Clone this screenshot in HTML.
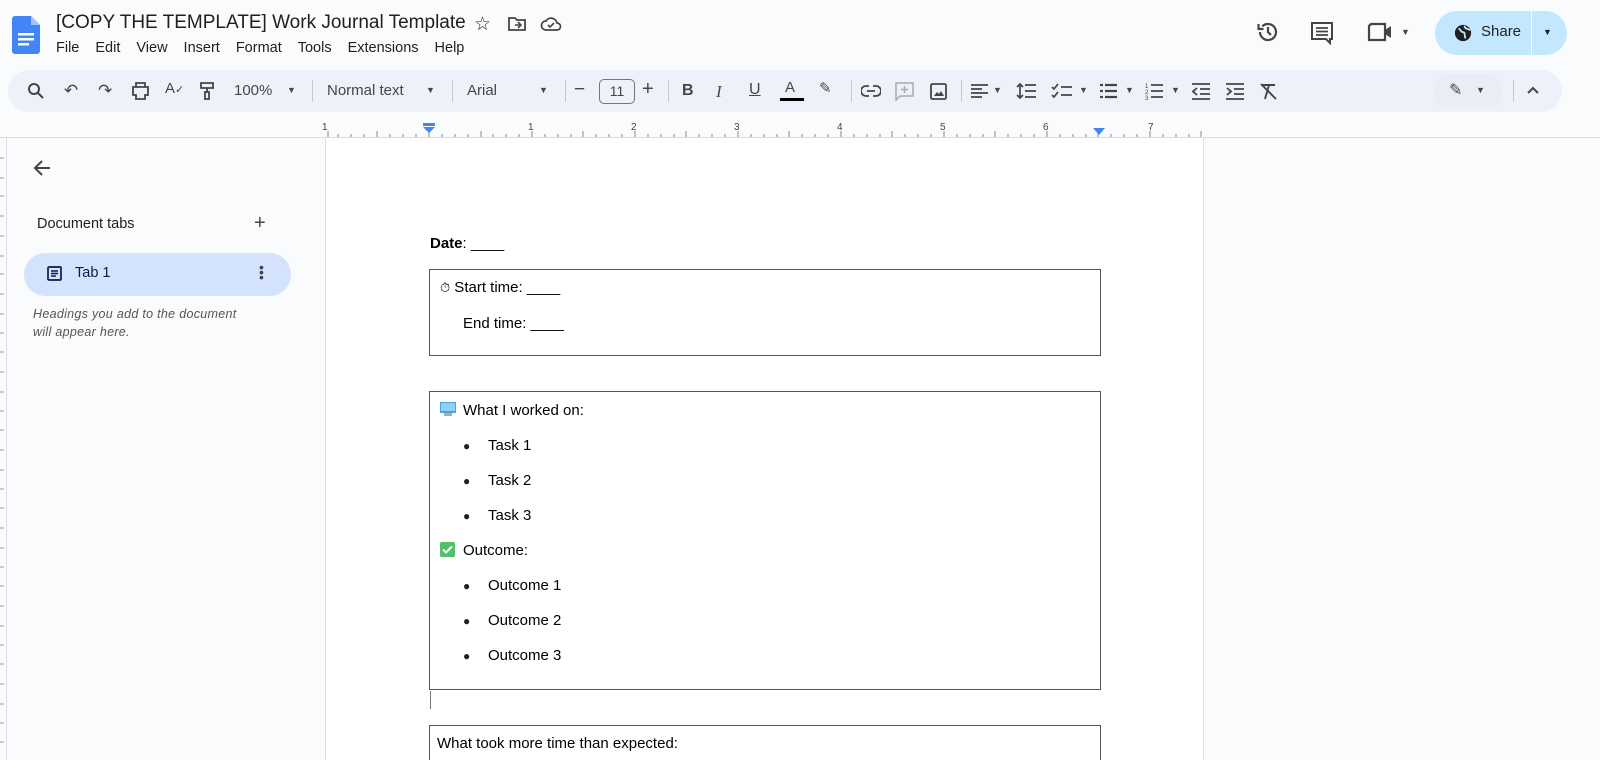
<!DOCTYPE html>
<html style="width:1600px;height:760px;overflow:hidden"><head><meta charset="utf-8"><style>
*{margin:0;padding:0;box-sizing:border-box}
body{width:1600px;height:760px;overflow:hidden;background:#f9fbfd;font-family:"Liberation Sans",Arial,sans-serif;color:#1f1f1f;position:relative}
.a{position:absolute}
.menu span{margin-right:16px}
.tb{left:8px;top:70px;width:1554px;height:42px;border-radius:21px;background:#edf2fa}
.sep{position:absolute;top:80px;width:1px;height:22px;background:#c7c7c7}
.ic{position:absolute;font-size:15px;color:#444746}
.doc{font-family:"Liberation Sans",Arial,sans-serif;font-size:15px;color:#000}
.box{position:absolute;left:429px;width:672px;border:1px solid #555}
.bul{position:absolute;left:463px;font-size:12px}
</style></head><body>
<svg class="a" style="left:12px;top:16px" width="28" height="38" viewBox="0 0 28 38"><path d="M3 0h16l9 9v26a3 3 0 0 1-3 3H3a3 3 0 0 1-3-3V3a3 3 0 0 1 3-3z" fill="#4285f4"/><path d="M19 0v9h9z" fill="#a1c2fa"/><rect x="6" y="17" width="16" height="2.5" fill="#fff"/><rect x="6" y="22" width="16" height="2.5" fill="#fff"/><rect x="6" y="27" width="11" height="2.5" fill="#fff"/></svg>
<div class="a" style="left:56px;top:12px;font-size:19px;color:#1f1f1f">[COPY THE TEMPLATE] Work Journal Template</div>
<div class="a" style="left:474px;top:13px;font-size:19px">☆</div>
<svg class="a" style="left:507px;top:16px" width="20" height="16" viewBox="0 0 20 16"><path d="M2 2h6l2 2h8v10H2z" fill="none" stroke="#444" stroke-width="1.8"/><path d="M8 9h6M11 6l3 3-3 3" fill="none" stroke="#444" stroke-width="1.6"/></svg>
<svg class="a" style="left:540px;top:16px" width="22" height="16" viewBox="0 0 22 16"><path d="M6 14a4.5 4.5 0 0 1 0-9 6 6 0 0 1 11 2 3.5 3.5 0 0 1 0 7z" fill="none" stroke="#444" stroke-width="1.7"/><path d="M8 9l2 2 4-4" fill="none" stroke="#444" stroke-width="1.6"/></svg>
<div class="a menu" style="left:56px;top:40px;font-size:14.5px;color:#1f1f1f"><span>File</span><span>Edit</span><span>View</span><span>Insert</span><span>Format</span><span>Tools</span><span>Extensions</span><span>Help</span></div>
<svg class="a" style="left:1255px;top:20px" width="26" height="24" viewBox="0 0 24 24"><path d="M4 12a8 8 0 1 0 2.3-5.6" fill="none" stroke="#444" stroke-width="2.2"/><path d="M2.5 4v5h5" fill="none" stroke="#444" stroke-width="2.2"/><path d="M12 7v5l3 3" fill="none" stroke="#444" stroke-width="2.2"/></svg>
<svg class="a" style="left:1310px;top:21px" width="24" height="24" viewBox="0 0 24 24"><path d="M2 2h20v16h-2v4l-4-4H2z" fill="none" stroke="#444" stroke-width="2"/><path d="M6 7h12M6 10.5h12M6 14h12" stroke="#444" stroke-width="1.8"/></svg>
<svg class="a" style="left:1367px;top:22px" width="28" height="20" viewBox="0 0 28 20"><path d="M4 2h14v16H2V4z" fill="none" stroke="#444" stroke-width="2.2"/><path d="M18 8l6-4v12l-6-4" fill="#444"/></svg>
<div class="a" style="left:1401px;top:27px;font-size:9px;color:#444">▼</div>
<div class="a" style="left:1435px;top:11px;width:132px;height:44px;border-radius:22px;background:#c2e7ff"></div>
<div class="a" style="left:1531px;top:11px;width:1px;height:44px;background:#f9fbfd"></div>
<svg class="a" style="left:1454px;top:24px" width="18" height="18" viewBox="0 0 20 20"><circle cx="10" cy="10" r="9" fill="#1f1f1f"/><path d="M5 5c3 1 2 4 5 4s1 5 3 7M12 2c-1 3 3 3 6 5" fill="none" stroke="#c2e7ff" stroke-width="2"/></svg>
<div class="a" style="left:1481px;top:23px;font-size:15px;color:#1f1f1f">Share</div>
<div class="a" style="left:1543px;top:27px;font-size:9px">▼</div>
<div class="a tb"></div>
<svg class="a" style="left:27px;top:82px" width="18" height="18" viewBox="0 0 18 18"><circle cx="7" cy="7" r="5" fill="none" stroke="#444" stroke-width="2"/><path d="M11 11l5 5" stroke="#444" stroke-width="2"/></svg>
<div class="ic" style="left:64px;top:81px;font-size:17px">↶</div>
<div class="ic" style="left:98px;top:81px;font-size:17px">↷</div>
<svg class="a" style="left:131px;top:82px" width="19" height="18" viewBox="0 0 19 18"><path d="M5 1h9v4H5zM2 5h15v8h-3v4H5v-4H2z" fill="none" stroke="#444" stroke-width="1.8"/></svg>
<div class="ic" style="left:165px;top:80px;font-size:15px">A<span style="font-size:11px">✓</span></div>
<svg class="a" style="left:199px;top:81px" width="16" height="20" viewBox="0 0 16 20"><path d="M2 2h12v5H2zM8 7v4M6 11h4v7H6z" fill="none" stroke="#444" stroke-width="1.8"/></svg>
<div class="ic" style="left:234px;top:82px;font-size:15px">100%</div>
<div class="ic" style="left:287px;top:85px;font-size:9px">▼</div>
<div class="sep" style="left:312px"></div>
<div class="ic" style="left:327px;top:82px;font-size:15px">Normal text</div>
<div class="ic" style="left:426px;top:85px;font-size:9px">▼</div>
<div class="sep" style="left:452px"></div>
<div class="ic" style="left:467px;top:82px;font-size:15px">Arial</div>
<div class="ic" style="left:539px;top:85px;font-size:9px">▼</div>
<div class="sep" style="left:565px"></div>
<div class="ic" style="left:574px;top:79px;font-size:19px">−</div>
<div class="a" style="left:599px;top:79px;width:36px;height:25px;border:1px solid #747775;border-radius:5px;font-size:14px;text-align:center;line-height:23px;color:#444">11</div>
<div class="ic" style="left:642px;top:78px;font-size:20px">+</div>
<div class="sep" style="left:668px"></div>
<div class="ic" style="left:682px;top:82px;font-weight:bold;font-size:16px">B</div>
<div class="ic" style="left:716px;top:82px;font-style:italic;font-size:17px;font-family:'Liberation Serif',serif">I</div>
<div class="ic" style="left:749px;top:81px;text-decoration:underline;font-size:16px">U</div>
<div class="ic" style="left:785px;top:79px;font-size:15px">A</div>
<div class="a" style="left:780px;top:98px;width:24px;height:3px;background:#000"></div>
<div class="ic" style="left:819px;top:79px;font-size:15px">✎</div>
<div class="sep" style="left:851px"></div>
<svg class="a" style="left:861px;top:85px" width="20" height="12" viewBox="0 0 20 12"><path d="M8 1H5a5 5 0 0 0 0 10h3M12 1h3a5 5 0 0 1 0 10h-3M6 6h8" fill="none" stroke="#444" stroke-width="1.8"/></svg>
<svg class="a" style="left:895px;top:82px" width="19" height="19" viewBox="0 0 19 19"><path d="M1 1h17v13H5l-4 4z" fill="none" stroke="#aaa" stroke-width="1.5"/><path d="M9.5 4v7M6 7.5h7" stroke="#aaa" stroke-width="1.5"/></svg>
<svg class="a" style="left:930px;top:83px" width="17" height="17" viewBox="0 0 17 17"><rect x="1" y="1" width="15" height="15" rx="1.5" fill="none" stroke="#444" stroke-width="1.8"/><path d="M4 13l3-4 2 2 2-3 3 5z" fill="#444"/></svg>
<div class="sep" style="left:961px"></div>
<svg class="a" style="left:971px;top:84px" width="17" height="15" viewBox="0 0 17 15"><path d="M0 1h17M0 5h11M0 9h17M0 13h11" stroke="#444" stroke-width="1.8"/></svg>
<div class="ic" style="left:993px;top:85px;font-size:9px">▼</div>
<svg class="a" style="left:1016px;top:83px" width="20" height="16" viewBox="0 0 20 16"><path d="M4 1v14M1 4l3-3 3 3M1 12l3 3 3-3M9 2h11M9 8h11M9 14h11" fill="none" stroke="#444" stroke-width="1.7"/></svg>
<svg class="a" style="left:1051px;top:83px" width="22" height="16" viewBox="0 0 22 16"><path d="M1 4l2 2 4-5M1 12l2 2 4-5M10 4h11M10 12h11" fill="none" stroke="#444" stroke-width="1.7"/></svg>
<div class="ic" style="left:1079px;top:85px;font-size:9px">▼</div>
<svg class="a" style="left:1099px;top:83px" width="18" height="16" viewBox="0 0 18 16"><path d="M1 2h3M1 8h3M1 14h3M6 2h12M6 8h12M6 14h12" stroke="#444" stroke-width="2.2"/></svg>
<div class="ic" style="left:1125px;top:85px;font-size:9px">▼</div>
<svg class="a" style="left:1145px;top:82px" width="18" height="18" viewBox="0 0 18 18"><path d="M6 3h12M6 9h12M6 15h12" stroke="#444" stroke-width="1.8"/><text x="0" y="6" font-size="6" fill="#444">1</text><text x="0" y="12" font-size="6" fill="#444">2</text><text x="0" y="18" font-size="6" fill="#444">3</text></svg>
<div class="ic" style="left:1171px;top:85px;font-size:9px">▼</div>
<svg class="a" style="left:1192px;top:83px" width="18" height="17" viewBox="0 0 18 17"><path d="M0 1h18M8 6h10M8 11h10M0 16h18M5 5l-4 3.5 4 3.5" fill="none" stroke="#444" stroke-width="1.8"/></svg>
<svg class="a" style="left:1226px;top:83px" width="18" height="17" viewBox="0 0 18 17"><path d="M0 1h18M8 6h10M8 11h10M0 16h18M1 5l4 3.5-4 3.5" fill="none" stroke="#444" stroke-width="1.8"/></svg>
<svg class="a" style="left:1259px;top:82px" width="19" height="19" viewBox="0 0 19 19"><path d="M3 3h13M10 3l-4 14M2 2l15 15" fill="none" stroke="#444" stroke-width="1.9"/></svg>
<div class="a" style="left:1433px;top:74px;width:70px;height:34px;border-radius:17px;background:#e9eef6"></div>
<div class="ic" style="left:1449px;top:80px;font-size:16px">✎</div>
<div class="ic" style="left:1476px;top:85px;font-size:9px">▼</div>
<div class="sep" style="left:1513px"></div>
<svg class="a" style="left:1527px;top:86px" width="12" height="8" viewBox="0 0 12 8"><path d="M1 7l5-5 5 5" fill="none" stroke="#444" stroke-width="2"/></svg>
<div class="a" style="left:0;top:137px;width:1600px;height:1px;background:#dadce0"></div>
<svg class="a" style="left:320px;top:118px" width="900" height="20">
<g stroke="#888" stroke-width="1">
<path d="M8 19v-6M18 19v-3M31 19v-3M44 19v-3M57 19v-6M70 19v-3M83 19v-3M96 19v-3M109 19v-6M122 19v-3M135 19v-3M148 19v-3M161 19v-6M173 19v-3M186 19v-3M199 19v-3M212 19v-6M225 19v-3M238 19v-3M251 19v-3M263 19v-6M276 19v-3M289 19v-3M302 19v-3M315 19v-6M328 19v-3M341 19v-3M354 19v-3M366 19v-6M379 19v-3M392 19v-3M405 19v-3M418 19v-6M431 19v-3M444 19v-3M457 19v-3M469 19v-6M482 19v-3M495 19v-3M508 19v-3M521 19v-6M534 19v-3M547 19v-3M560 19v-3M572 19v-6M585 19v-3M598 19v-3M611 19v-3M624 19v-6M637 19v-3M650 19v-3M663 19v-3M675 19v-6M688 19v-3M701 19v-3M714 19v-3M727 19v-6M740 19v-3M753 19v-3M766 19v-3M778 19v-6M791 19v-3M804 19v-3M817 19v-3M830 19v-6M843 19v-3M856 19v-3M869 19v-3M881 19v-6"/></g>
<g font-size="10" fill="#444" font-family="Liberation Sans"><text x="2" y="12">1</text><text x="208" y="12">1</text><text x="311" y="12">2</text><text x="414" y="12">3</text><text x="517" y="12">4</text><text x="620" y="12">5</text><text x="723" y="12">6</text><text x="828" y="12">7</text></g>
<rect x="103" y="5" width="12" height="3" fill="#4285f4"/><path d="M103 9h12l-6 6z" fill="#4285f4"/><path d="M773 10h12l-6 7z" fill="#4285f4"/>
</svg>
<div class="a" style="left:6px;top:138px;width:1px;height:622px;background:#dadce0"></div>
<svg class="a" style="left:0;top:138px" width="6" height="622"><g stroke="#999"><path d="M0 20h4M0 40h4M0 58h4M0 78h4M0 98h4M0 118h4M0 136h4M0 156h4M0 176h4M0 195h4M0 214h4M0 234h4M0 254h4M0 273h4M0 292h4M0 312h4M0 332h4M0 351h4M0 370h4M0 390h4M0 410h4M0 429h4M0 448h4M0 468h4M0 488h4M0 507h4M0 526h4M0 546h4M0 566h4M0 585h4M0 604h4"/></g></svg>
<svg class="a" style="left:33px;top:159px" width="18" height="18" viewBox="0 0 18 18"><path d="M17 9H2M9 2L2 9l7 7" fill="none" stroke="#444" stroke-width="2"/></svg>
<div class="a" style="left:37px;top:216px;font-size:14.5px;color:#1f1f1f">Document tabs</div>
<div class="a" style="left:254px;top:212px;font-size:20px;color:#444">+</div>
<div class="a" style="left:24px;top:253px;width:267px;height:43px;border-radius:22px;background:#d3e3fd"></div>
<svg class="a" style="left:47px;top:266px" width="15" height="15" viewBox="0 0 15 15"><rect x="1" y="1" width="13" height="13" rx="1" fill="none" stroke="#0b1b48" stroke-width="1.7"/><path d="M4 5h7M4 7.5h7M4 10h5" stroke="#0b1b48" stroke-width="1.5"/></svg>
<div class="a" style="left:75px;top:265px;font-size:14.5px;color:#0b1b48">Tab 1</div>
<div class="a" style="left:259px;top:265px;width:4px;font-size:14px;line-height:5px;color:#444">•<br>•<br>•</div>
<div class="a" style="left:33px;top:305px;font-size:12.5px;font-style:italic;color:#555;line-height:18px;letter-spacing:.3px">Headings you add to the document<br>will appear here.</div>
<div class="a" style="left:325px;top:138px;width:879px;height:622px;background:#fff;border-left:1px solid #e0e0e0;border-right:1px solid #e0e0e0"></div>
<div class="a doc" style="left:430px;top:235px"><b>Date</b>: ____</div>
<div class="box" style="top:269px;height:87px"></div>
<div class="a doc" style="left:440px;top:279px"><span style="font-size:13px">⏱</span> Start time: ____</div>
<div class="a doc" style="left:463px;top:315px">End time: ____</div>
<div class="box" style="top:391px;height:299px"></div>
<svg class="a" style="left:440px;top:402px" width="16" height="15" viewBox="0 0 16 15"><rect x="0" y="0" width="16" height="11" fill="#4aa3df"/><rect x="1" y="1" width="14" height="8" fill="#8fd0f5"/><rect x="4" y="11" width="8" height="3" fill="#aaa"/></svg>
<div class="a doc" style="left:463px;top:402px">What I worked on:</div>
<div class="bul" style="top:439px">●</div><div class="a doc" style="left:488px;top:437px">Task 1</div>
<div class="bul" style="top:474px">●</div><div class="a doc" style="left:488px;top:472px">Task 2</div>
<div class="bul" style="top:509px">●</div><div class="a doc" style="left:488px;top:507px">Task 3</div>
<svg class="a" style="left:440px;top:542px" width="15" height="15" viewBox="0 0 15 15"><rect width="15" height="15" rx="2" fill="#4fc16a"/><path d="M3 7.5l3 3 6-6" fill="none" stroke="#fff" stroke-width="2"/></svg>
<div class="a doc" style="left:463px;top:542px">Outcome:</div>
<div class="bul" style="top:579px">●</div><div class="a doc" style="left:488px;top:577px">Outcome 1</div>
<div class="bul" style="top:614px">●</div><div class="a doc" style="left:488px;top:612px">Outcome 2</div>
<div class="bul" style="top:649px">●</div><div class="a doc" style="left:488px;top:647px">Outcome 3</div>
<div class="a" style="left:430px;top:691px;width:1px;height:18px;background:#777"></div>
<div class="a" style="left:429px;top:725px;width:672px;height:35px;border:1px solid #555;border-bottom:none"></div>
<div class="a doc" style="left:437px;top:735px">What took more time than expected:</div>
</body></html>
